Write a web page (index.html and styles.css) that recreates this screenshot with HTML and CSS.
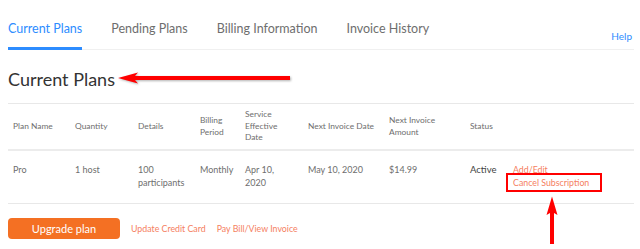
FILE: index.html
```html
<!DOCTYPE html>
<html>
<head>
<meta charset="utf-8">
<link rel="stylesheet" href="styles.css">
</head>
<body>
<div class="page">
  <div class="tabbar">
    <div class="tabs">
      <a class="tab active">Current Plans</a>
      <a class="tab">Pending Plans</a>
      <a class="tab">Billing Information</a>
      <a class="tab">Invoice History</a>
    </div>
    <a class="help">Help</a>
  </div>
  <h1 class="title">Current Plans</h1>
  <table class="plans">
    <colgroup>
      <col style="width:62px"><col style="width:63px"><col style="width:62px"><col style="width:45px"><col style="width:63px"><col style="width:81px"><col style="width:81px"><col style="width:43px"><col>
    </colgroup>
    <thead>
      <tr>
        <th>Plan Name</th>
        <th>Quantity</th>
        <th>Details</th>
        <th>Billing Period</th>
        <th class="narrow">Service Effective Date</th>
        <th>Next Invoice Date</th>
        <th>Next Invoice Amount</th>
        <th>Status</th>
        <th></th>
      </tr>
    </thead>
    <tbody>
      <tr>
        <td>Pro</td>
        <td>1 host</td>
        <td>100 participants</td>
        <td>Monthly</td>
        <td class="narrow">Apr 10, 2020</td>
        <td>May 10, 2020</td>
        <td>$14.99</td>
        <td class="status">Active</td>
        <td class="actions"><a class="link">Add/Edit</a><a class="link cancel">Cancel Subscription</a></td>
      </tr>
    </tbody>
  </table>
  <div class="footer">
    <button class="upgrade">Upgrade plan</button>
    <a class="link">Update Credit Card</a>
    <a class="link">Pay Bill/View Invoice</a>
  </div>
</div>
<svg class="arrow-left" width="176" height="14" viewBox="0 0 176 14">
  <path d="M1 7 L21 1.5 L18 5 L173 5 L173 9 L18 9 L21 12.5 Z" fill="#f00"/>
</svg>
<div class="box"></div>
<svg class="arrow-up" width="14" height="50" viewBox="0 0 14 50">
  <path d="M7 0.5 L12.5 19 L9 17 L9 48 L5 48 L5 17 L1.5 19 Z" fill="#f00"/>
</svg>
</body>
</html>
```
FILE: styles.css
```css
html, body { margin: 0; padding: 0; background: #fff; }
body { font-family: Lato, "Noto Sans", sans-serif; color: #666; width: 640px; height: 249px; overflow: hidden; position: relative; }
.page { padding: 0 6px 0 8px; }
.tabbar { display: flex; justify-content: space-between; align-items: flex-end; border-bottom: 1px solid #f0f0f0; height: 49px; }
.tabs { display: flex; gap: 29px; }
.tab { font-size: 12.5px; color: #6e6e6e; padding-bottom: 11px; border-bottom: 3px solid transparent; margin-bottom: -1px; line-height: 15px; }
.tab.active { color: #2d8cff; border-bottom-color: #2d8cff; }
.help { font-size: 10px; color: #2d8cff; padding-bottom: 7px; padding-right: 2px; }
.title { font-size: 18px; font-weight: 400; color: #333; margin: 18px 0 0; line-height: 22px; height: 35px; }
.plans { width: 626px; table-layout: fixed; border-collapse: collapse; border-top: 1px solid #e8e8e8; }
.plans th { font-size: 8.4px; font-weight: 400; color: #6e6e6e; text-align: left; padding: 0 6px 0 5px; height: 45px; line-height: 11.5px; vertical-align: middle; border-bottom: 2px solid #ececec; }
.plans td { font-size: 9px; color: #6e6e6e; padding: 13px 6px 0 5px; height: 39px; line-height: 12.5px; vertical-align: top; border-bottom: 1px solid #e8e8e8; }
.plans .narrow { padding-right: 12px; }
.plans td.status { color: #444; font-size: 9.5px; }
.actions .link { display: block; }
.link { color: #f5805f; font-size: 8.8px; }
.footer { display: flex; align-items: center; gap: 11px; margin-top: 14px; }
.upgrade { width: 112px; height: 21px; border: none; border-radius: 4px; background: #f47023; color: #fff; font-family: Lato, sans-serif; font-size: 11px; padding: 0; }
.arrow-left { position: absolute; left: 117px; top: 71px; filter: drop-shadow(1px 1px 1px rgba(0,0,0,0.3)); }
.box { position: absolute; left: 506px; top: 173px; width: 92px; height: 15px; border: 2px solid #f00; }
.arrow-up { position: absolute; left: 545px; top: 196px; }
```
